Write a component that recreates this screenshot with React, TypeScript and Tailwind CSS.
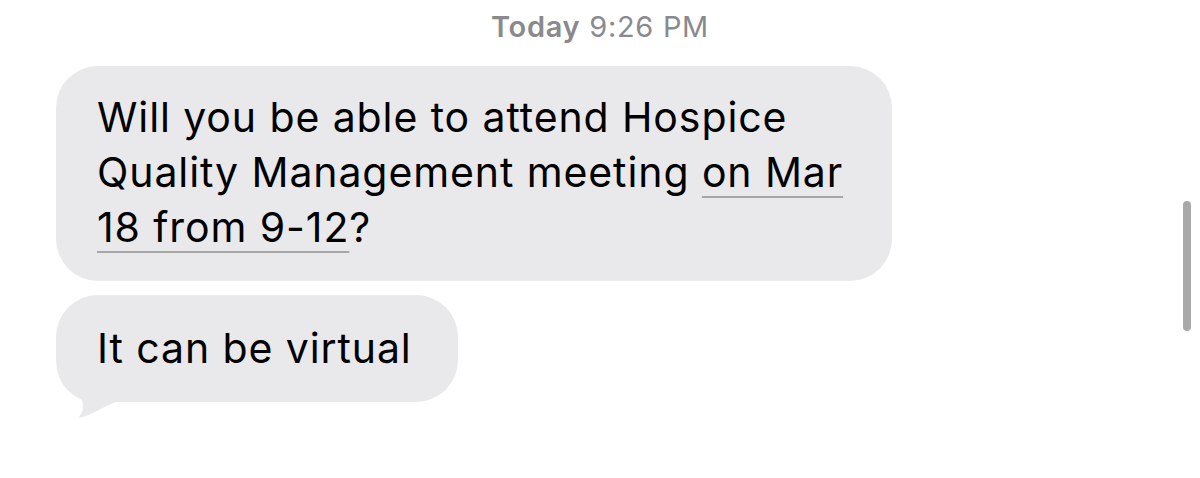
import React from 'react';

const BubbleTail: React.FC = () => (
  <svg
    className="absolute left-0 top-[67px]"
    width="64"
    height="60"
    viewBox="0 0 64 60"
  >
    <path
      d="M0 0 L1 0 C 1 14, 6 28, 26 38 C 28 44, 27 52, 22 56 C 32 55, 44 46, 60 40 L 64 40 L 64 0 Z"
      fill="#e9e9eb"
    />
  </svg>
);

const App: React.FC = () => {
  return (
    <div
      className="w-[1200px] h-[478px] bg-white relative overflow-hidden flex flex-col"
      style={{ fontFamily: 'Inter, "Noto Sans", sans-serif' }}
    >
      {/* timestamp */}
      <div className="pt-[10px] text-center text-[29px] leading-[34px] tracking-[0.7px] text-[#8a8a8e]">
        <span className="font-semibold">Today</span>{' '}
        <span>9:26 PM</span>
      </div>

      <div className="pl-[56px] pt-[22px] flex flex-col items-start gap-[14px]">
        <div className="w-[836px] h-[215px] rounded-[42px] bg-[#e9e9eb] pl-[41px] pt-[24px] text-[41px] leading-[55px] text-black tracking-[0.9px]">
          Will you be able to attend Hospice
          <br />
          Quality Management meeting{' '}
          <span className="underline decoration-[#a6a6a6] decoration-2 underline-offset-[9px]">
            on Mar
            <br />
            18 from 9-12
          </span>
          ?
        </div>

        <div className="relative h-[107px] rounded-[42px] bg-[#e9e9eb] pl-[41px] pr-[46px] flex items-center text-[41px] leading-[55px] text-black tracking-[0.9px]">
          <BubbleTail />
          <span className="relative">It can be virtual</span>
        </div>
      </div>

      {/* scrollbar */}
      <div className="absolute left-[1183px] top-[201px] w-[8px] h-[130px] rounded-full bg-[#a9a9a9]" />
    </div>
  );
};

export default App;
